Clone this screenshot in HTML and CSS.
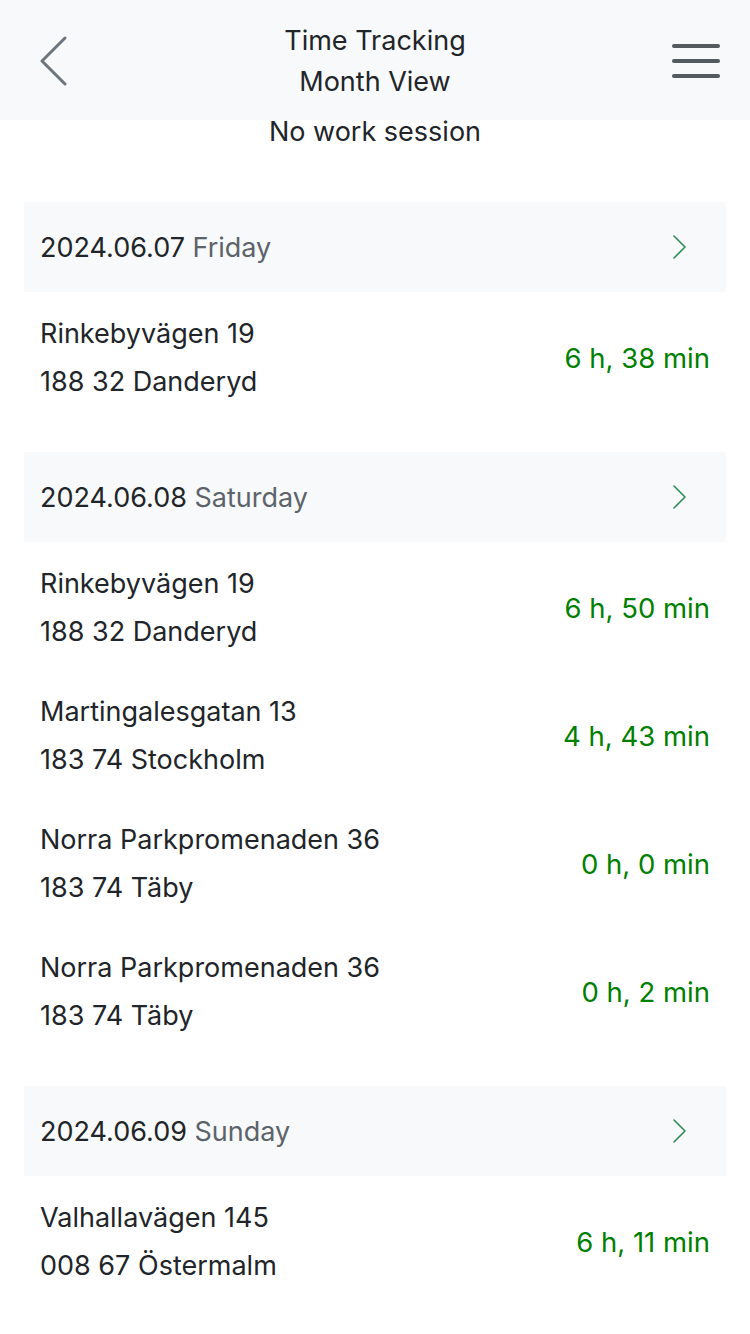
FILE: index.html
```html
<!DOCTYPE html>
<html>
<head>
<meta charset="utf-8">
<link rel="stylesheet" href="styles.css">
</head>
<body>
<header class="topbar">
  <div class="back">
    <svg width="30" height="50" viewBox="0 0 30 50"><path d="M26 2 L3 25 L26 48" fill="none" stroke="#6c757d" stroke-width="3" stroke-linecap="round" stroke-linejoin="round"/></svg>
  </div>
  <div class="title">
    <div>Time Tracking</div>
    <div>Month View</div>
  </div>
  <div class="menu">
    <svg width="48" height="36" viewBox="0 0 48 36"><g stroke="#555a5e" stroke-width="4" stroke-linecap="round"><line x1="2" y1="3" x2="46" y2="3"/><line x1="2" y1="18" x2="46" y2="18"/><line x1="2" y1="33" x2="46" y2="33"/></g></svg>
  </div>
</header>
<div class="status">No work session</div>
<main class="list">
  <section class="group">
    <div class="day"><span class="date">2024.06.07 <span class="wd">Friday</span></span><svg class="chev" width="16" height="26" viewBox="0 0 16 26"><path d="M2 2 L13 13 L2 24" fill="none" stroke="#2e8b57" stroke-width="1.6" stroke-linecap="round" stroke-linejoin="round"/></svg></div>
    <div class="item"><div class="addr"><div>Rinkebyvägen 19</div><div>188 32 Danderyd</div></div><div class="dur">6 h, 38 min</div></div>
  </section>
  <section class="group">
    <div class="day"><span class="date">2024.06.08 <span class="wd">Saturday</span></span><svg class="chev" width="16" height="26" viewBox="0 0 16 26"><path d="M2 2 L13 13 L2 24" fill="none" stroke="#2e8b57" stroke-width="1.6" stroke-linecap="round" stroke-linejoin="round"/></svg></div>
    <div class="item"><div class="addr"><div>Rinkebyvägen 19</div><div>188 32 Danderyd</div></div><div class="dur">6 h, 50 min</div></div>
    <div class="item"><div class="addr"><div>Martingalesgatan 13</div><div>183 74 Stockholm</div></div><div class="dur">4 h, 43 min</div></div>
    <div class="item"><div class="addr"><div>Norra Parkpromenaden 36</div><div>183 74 Täby</div></div><div class="dur">0 h, 0 min</div></div>
    <div class="item"><div class="addr"><div>Norra Parkpromenaden 36</div><div>183 74 Täby</div></div><div class="dur">0 h, 2 min</div></div>
  </section>
  <section class="group">
    <div class="day"><span class="date">2024.06.09 <span class="wd">Sunday</span></span><svg class="chev" width="16" height="26" viewBox="0 0 16 26"><path d="M2 2 L13 13 L2 24" fill="none" stroke="#2e8b57" stroke-width="1.6" stroke-linecap="round" stroke-linejoin="round"/></svg></div>
    <div class="item"><div class="addr"><div>Valhallavägen 145</div><div>008 67 Östermalm</div></div><div class="dur">6 h, 11 min</div></div>
  </section>
</main>
</body>
</html>
```

FILE: styles.css
```css
* { box-sizing: border-box; }
html, body { margin: 0; padding: 0; background: #fff; }
body {
  font-family: Inter, "Liberation Sans", sans-serif;
  color: #212529;
  font-size: 27px;
  width: 750px;
  overflow: hidden;
}
.topbar {
  height: 120px;
  background: #f8f9fa;
  display: grid;
  grid-template-columns: 1fr auto 1fr;
  align-items: center;
  padding: 0 30px;
}
.back { width: 30px; height: 50px; display: flex; margin-top: 2px; margin-left: 9px; justify-self: start; }
.menu { width: 48px; height: 36px; display: flex; margin-top: 2px; justify-self: end; }
.title {
  text-align: center;
  line-height: 41px;
  margin-top: 1px;
}
.status {
  text-align: center;
  line-height: 24px;
  margin-bottom: 58px;
}
.list { padding: 0 24px; }
.group { margin-bottom: 32px; }
.day {
  height: 90px;
  background: #f8f9fa;
  display: flex;
  align-items: center;
  justify-content: space-between;
  padding: 0 38px 0 16px;
}
.wd { color: #5c636a; }
.chev { display: block; }
.item {
  display: flex;
  justify-content: space-between;
  align-items: center;
  padding: 18px 16px 14px;
  line-height: 48px;
}
.dur { color: #008000; font-size: 27.5px; }
```
